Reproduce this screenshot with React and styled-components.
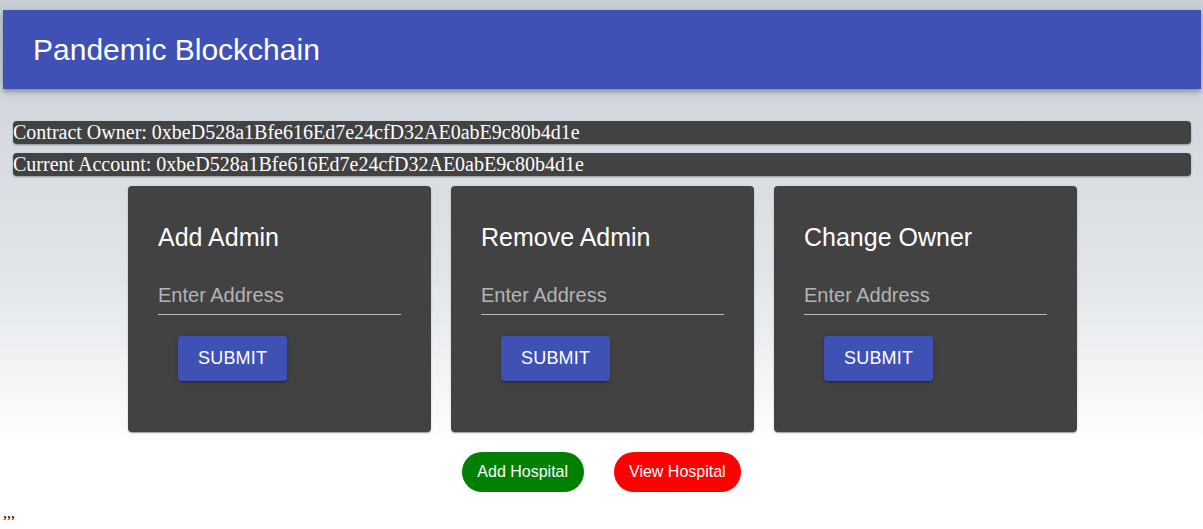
import React from 'react';
import styled, { createGlobalStyle } from 'styled-components';

const GlobalStyle = createGlobalStyle`
  html, body {
    margin: 0;
    padding: 0;
  }
  body {
    min-height: 100vh;
    background-color: #ffffff;
    background-image: linear-gradient(to bottom, #c8cfd7 0px, #e2e6ea 280px, #ffffff 445px);
    background-repeat: no-repeat;
    font-family: "Liberation Serif", "Times New Roman", serif;
  }
`;

const Page = styled.div`
  padding-top: 10px;
`;

const AppBar = styled.header`
  height: 79px;
  margin: 0 2px 0 3px;
  padding-left: 30px;
  display: flex;
  align-items: center;
  background-color: #3f51b5;
  box-shadow: 0 2px 4px -1px rgba(0, 0, 0, 0.2), 0 4px 5px 0 rgba(0, 0, 0, 0.14),
    0 1px 10px 0 rgba(0, 0, 0, 0.12);
`;

const AppTitle = styled.h1`
  margin: 0;
  font-family: "Liberation Sans", Arial, sans-serif;
  font-size: 30px;
  font-weight: 400;
  color: #ffffff;
`;

const InfoList = styled.div`
  margin: 32px 12px 0 13px;
  display: flex;
  flex-direction: column;
  gap: 9px;
`;

const InfoBar = styled.div`
  background-color: #424242;
  border-radius: 4px;
  box-shadow: 0 1px 2px rgba(0, 0, 0, 0.35);
  color: #ffffff;
  font-size: 20px;
  line-height: 23px;
  white-space: nowrap;
`;

const CardRow = styled.div`
  margin-top: 10px;
  padding-left: 2px;
  display: flex;
  justify-content: center;
  gap: 20px;
`;

const Card = styled.div`
  width: 303px;
  height: 246px;
  box-sizing: border-box;
  padding: 35px 30px 0;
  background-color: #424242;
  border-radius: 4px;
  box-shadow: 0 2px 1px -1px rgba(0, 0, 0, 0.2), 0 1px 1px 0 rgba(0, 0, 0, 0.14),
    0 1px 3px 0 rgba(0, 0, 0, 0.12);
  font-family: "Liberation Sans", Arial, sans-serif;
`;

const CardTitle = styled.h2`
  margin: 0;
  font-size: 25px;
  line-height: 32px;
  font-weight: 400;
  color: #ffffff;
`;

const AddressInput = styled.input`
  display: block;
  width: 100%;
  box-sizing: border-box;
  margin-top: 24px;
  padding: 6px 0 7px;
  border: none;
  border-bottom: 1px solid #bdbdbd;
  background: transparent;
  outline: none;
  color: #ffffff;
  font-family: inherit;
  font-size: 20px;
  line-height: 24px;

  &::placeholder {
    color: #b4b4b4;
    opacity: 1;
  }
`;

const SubmitButton = styled.button`
  display: block;
  height: 45px;
  margin: 21px 0 0 20px;
  padding: 0 20px;
  border: none;
  border-radius: 4px;
  background-color: #3f51b5;
  color: #ffffff;
  font-family: inherit;
  font-size: 18px;
  letter-spacing: 0.2px;
  text-transform: uppercase;
  box-shadow: 0 3px 1px -2px rgba(0, 0, 0, 0.2), 0 2px 2px 0 rgba(0, 0, 0, 0.14),
    0 1px 5px 0 rgba(0, 0, 0, 0.12);
  cursor: pointer;
`;

const ActionRow = styled.div`
  margin-top: 20px;
  display: flex;
  justify-content: center;
  gap: 30px;
`;

const PillButton = styled.button`
  height: 40px;
  padding: 0 15.5px;
  border: none;
  border-radius: 20px;
  background-color: ${(p) => p.$color};
  color: #ffffff;
  font-family: "Liberation Sans", Arial, sans-serif;
  font-size: 16px;
  cursor: pointer;
`;

const Stray = styled.div`
  margin-top: 12px;
  padding-left: 3px;
  font-size: 16px;
  color: #000000;
`;

const ADDRESS = '0xbeD528a1Bfe616Ed7e24cfD32AE0abE9c80b4d1e';

const forms = ['Add Admin', 'Remove Admin', 'Change Owner'];

function AdminCard({ title }) {
  return (
    <Card>
      <CardTitle>{title}</CardTitle>
      <AddressInput type="text" placeholder="Enter Address" />
      <SubmitButton type="button">Submit</SubmitButton>
    </Card>
  );
}

export default function App() {
  return (
    <>
      <GlobalStyle />
      <Page>
        <AppBar>
          <AppTitle>Pandemic Blockchain</AppTitle>
        </AppBar>

        <InfoList>
          <InfoBar>Contract Owner: {ADDRESS}</InfoBar>
          <InfoBar>Current Account: {ADDRESS}</InfoBar>
        </InfoList>

        <CardRow>
          {forms.map((title) => (
            <AdminCard key={title} title={title} />
          ))}
        </CardRow>

        <ActionRow>
          <PillButton $color="#008000">Add Hospital</PillButton>
          <PillButton $color="#ff0000">View Hospital</PillButton>
        </ActionRow>

        <Stray>,,,</Stray>
      </Page>
    </>
  );
}
